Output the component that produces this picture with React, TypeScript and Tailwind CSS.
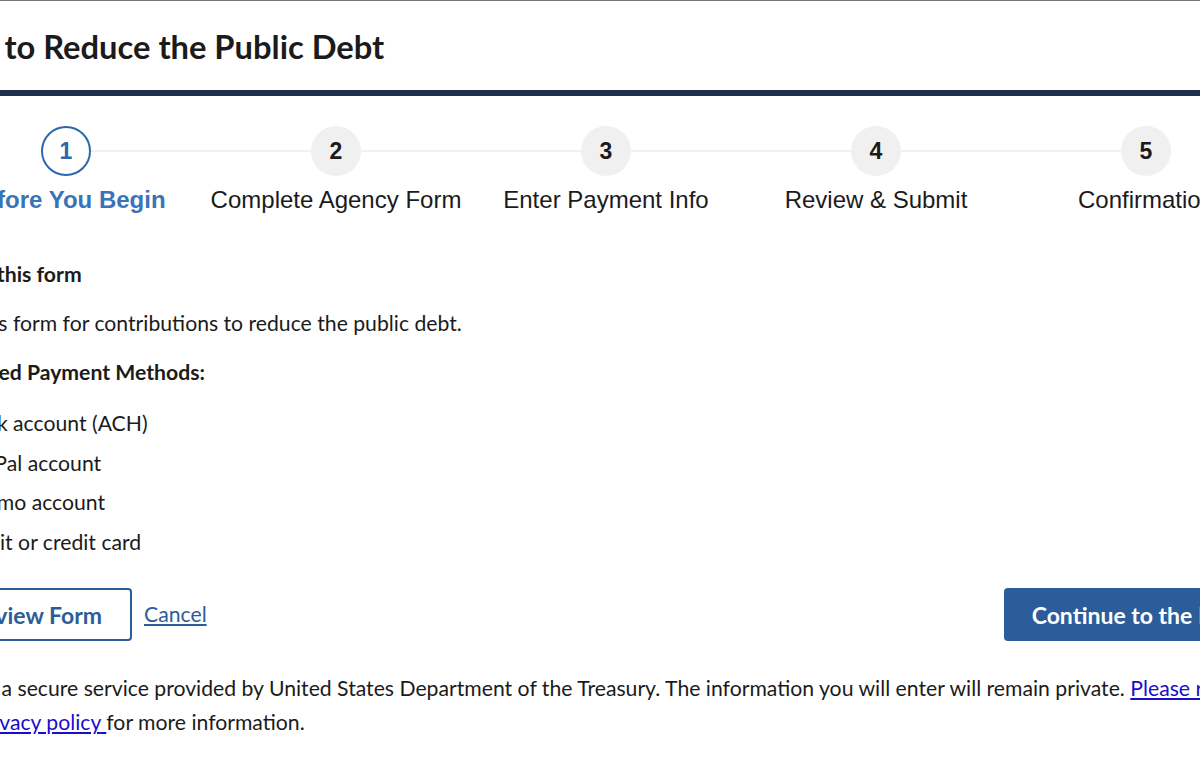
export default function App() {
  const steps = [
    "Before You Begin",
    "Complete Agency Form",
    "Enter Payment Info",
    "Review & Submit",
    "Confirmation",
  ];
  const methods = ["Bank account (ACH)", "PayPal account", "Venmo account", "Debit or credit card"];
  return (
    <div className="w-[1200px] h-[780px] overflow-hidden bg-white text-[#1b1b1b] font-['Lato',sans-serif]">
      <div className="border-t border-[#71767a]">
        <div className="-ml-[69px] w-[1350px]">
          <div className="h-[89px] pt-[28px]">
            <h1 className="-ml-[4px] text-[32.7px] leading-[36px] font-bold">Gifts to Reduce the Public Debt</h1>
          </div>
          <div className="h-[6px] bg-[#1f2e4e]" />
          <div className="grid grid-cols-5 mt-[30px] font-['Liberation_Sans',Arial,sans-serif]">
            {steps.map((s, i) => (
              <div key={s} className="flex flex-col items-center">
                <div className="flex items-center w-full">
                  <div className={i === 0 ? "flex-1 h-[2px]" : "flex-1 h-[2px] bg-[#f0f0f0]"} />
                  {i === 0 ? (
                    <div className="w-[50px] h-[50px] rounded-full border-[2.5px] border-[#2f67ab] bg-white text-[#2f67ab] flex items-center justify-center text-[23px] font-bold">
                      {i + 1}
                    </div>
                  ) : (
                    <div className="w-[50px] h-[50px] rounded-full bg-[#f0f0f0] text-[#1b1b1b] flex items-center justify-center text-[23px] font-bold">
                      {i + 1}
                    </div>
                  )}
                  <div className={i === 4 ? "flex-1 h-[2px]" : "flex-1 h-[2px] bg-[#f0f0f0]"} />
                </div>
                <div
                  className={
                    i === 0
                      ? "mt-[9px] text-[24px] leading-[30px] font-bold text-[#3a74b8]"
                      : "mt-[9px] text-[24px] leading-[30px] text-[#1b1b1b]"
                  }
                >
                  {s}
                </div>
              </div>
            ))}
          </div>
          <div className="pl-[2px] pr-[2px] mt-[44px] text-[21.2px]">
            <h2 className="font-bold leading-[30px]">About this form</h2>
            <p className="mt-[19px] leading-[30px]">Use this form for contributions to reduce the public debt.</p>
            <h3 className="mt-[19px] font-bold leading-[30px]">Accepted Payment Methods:</h3>
            <ul className="mt-[17px] list-disc pl-[28px]">
              {methods.map((m) => (
                <li key={m} className="leading-[39.6px]">
                  {m}
                </li>
              ))}
            </ul>
            <div className="mt-[26px] flex items-center">
              <button className="h-[53px] pl-[26px] pr-[28px] border-2 border-[#2d5d98] rounded-[4px] text-[#2d5d98] font-bold text-[23px]">
                Preview Form
              </button>
              <a href="#" className="ml-[12px] text-[#2d5d98] underline text-[21.2px]">
                Cancel
              </a>
              <button className="ml-auto h-[53px] px-[28px] bg-[#2b5d9b] rounded-[4px] text-white font-bold text-[23px]">
                Continue to the Form
              </button>
            </div>
            <p className="pl-[5px] mt-[30px] leading-[34px] whitespace-nowrap">
              This is a secure service provided by United States Department of the Treasury. The information you will enter will remain private.{" "}
              <a href="#" className="text-[#1a0dcc] underline">
                Please read
                <br />
                our privacy policy{" "}
              </a>
              for more information.
            </p>
          </div>
        </div>
      </div>
    </div>
  );
}
